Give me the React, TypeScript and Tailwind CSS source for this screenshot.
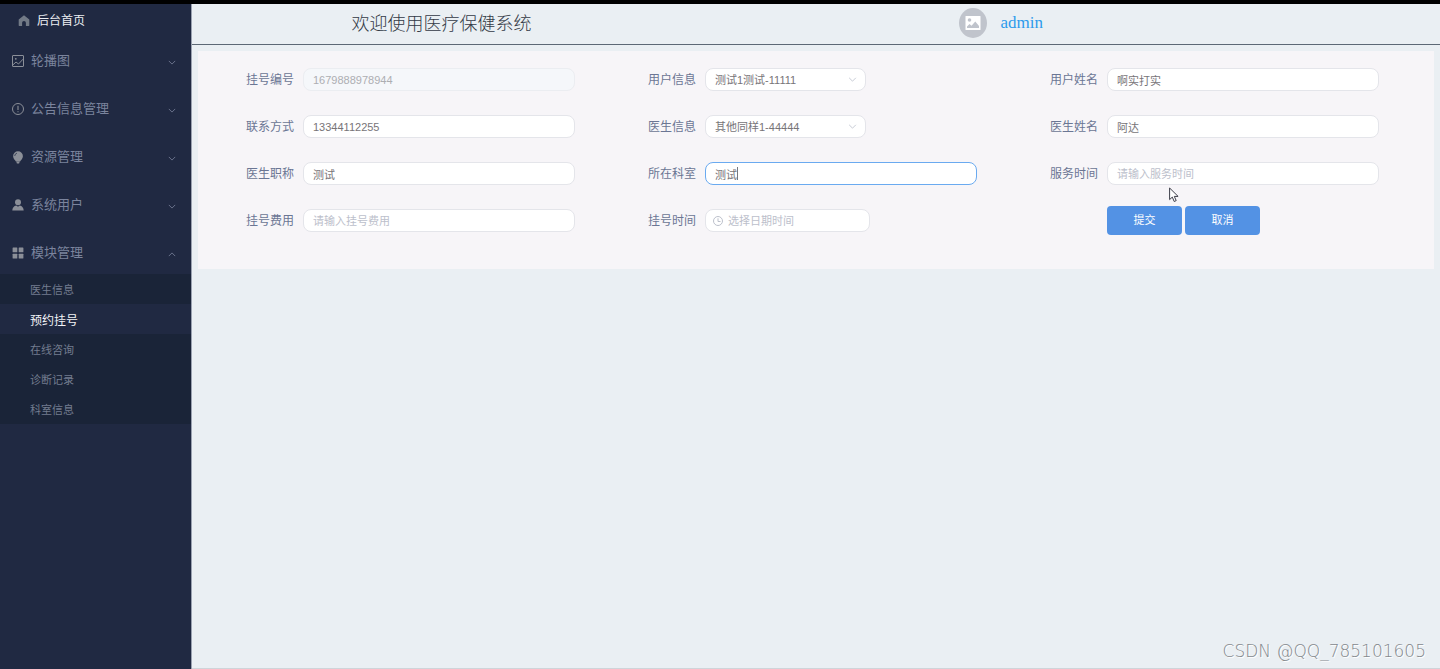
import type { ReactNode } from "react";

const inputBase =
  "block h-[23px] rounded-lg border border-[#e4e5ea] bg-white px-[9px] text-[11px] leading-4 text-[#777478] outline-none placeholder:text-[#bcc0cb] disabled:border-[#ebedf1] disabled:bg-[#f5f7fa] disabled:text-[#adaeb2]";

function Chevron({ className }: { className: string }) {
  return (
    <svg viewBox="0 0 10 6" className={className} fill="none" stroke="currentColor" strokeWidth="1" aria-hidden="true">
      <path d="M1 1l4 4 4-4" />
    </svg>
  );
}

function HomeIcon() {
  return (
    <svg viewBox="0 0 12 12" className="h-3 w-3 text-[#727a86]" fill="currentColor" aria-hidden="true">
      <path d="M6 .3.7 4.600v5.900c0 .3.2.5.5.5h2.900V8c0-1.100.8-1.900 1.900-1.900s1.900.8 1.900 1.900v3h2.900c.3 0 .5-.2.5-.5V4.600z" />
    </svg>
  );
}

function PictureIcon() {
  return (
    <svg viewBox="0 0 12 12" className="h-3 w-3" fill="none" stroke="currentColor" aria-hidden="true">
      <rect x=".5" y=".5" width="11" height="11" rx=".4" />
      <circle cx="3.8" cy="3.8" r=".9" fill="currentColor" stroke="none" />
      <path d="M1 9.800 4 7l2.500 2L11 4.200" />
    </svg>
  );
}

function WarningIcon() {
  return (
    <svg viewBox="0 0 12 12" className="h-3 w-3" fill="none" stroke="currentColor" aria-hidden="true">
      <circle cx="6" cy="6" r="5.5" />
      <path d="M6 2.800v4.200M6 8.200v1.100" strokeWidth="1.1" />
    </svg>
  );
}

function BulbIcon() {
  return (
    <svg viewBox="0 0 12 13" className="h-[13px] w-3" fill="currentColor" aria-hidden="true">
      <path d="M6 .3a4.900 4.900 0 0 0-4.900 4.900c0 2.300 1.800 3.700 2.800 5.300h4.200c1-1.600 2.800-3 2.800-5.300A4.900 4.900 0 0 0 6 .3z" />
      <path d="M4.300 10.500h3.400l-.6 2H4.900z" />
      <path d="M2.700 5A3.300 3.300 0 0 1 5 2.100" fill="none" stroke="#202942" strokeWidth=".7" />
    </svg>
  );
}

function UserIcon() {
  return (
    <svg viewBox="0 0 12 12" className="h-3 w-3" fill="currentColor" aria-hidden="true">
      <circle cx="6" cy="3.2" r="3" />
      <path d="M.3 11.500c0-2.700 1.600-4.500 4-5L6 7.800l1.700-1.300c2.400.5 4 2.300 4 5z" />
    </svg>
  );
}

function GridIcon() {
  return (
    <svg viewBox="0 0 12 12" className="h-3 w-3" fill="currentColor" aria-hidden="true">
      <rect x=".6" y=".6" width="4.7" height="4.7" rx=".5" />
      <rect x="6.7" y=".6" width="4.7" height="4.7" rx=".5" />
      <rect x=".6" y="6.7" width="4.7" height="4.7" rx=".5" />
      <rect x="6.7" y="6.7" width="4.7" height="4.7" rx=".5" />
    </svg>
  );
}

const menu: { label: string; icon: ReactNode; open?: boolean }[] = [
  { label: "轮播图", icon: <PictureIcon /> },
  { label: "公告信息管理", icon: <WarningIcon /> },
  { label: "资源管理", icon: <BulbIcon /> },
  { label: "系统用户", icon: <UserIcon /> },
  { label: "模块管理", icon: <GridIcon />, open: true },
];

const modules = ["医生信息", "预约挂号", "在线咨询", "诊断记录", "科室信息"];

function Sidebar() {
  return (
    <nav className="w-48 shrink-0 border-r border-[#9aa1b0] bg-[#202942]">
      <a href="#home" className="flex h-[33px] items-center gap-[7px] pl-[18px] text-xs text-[#eceef2]">
        <HomeIcon />
        后台首页
      </a>
      <ul className="flex flex-col gap-2 pt-1">
        {menu.map((item) => (
          <li key={item.label}>
            <button
              type="button"
              aria-expanded={!!item.open}
              className="flex h-10 w-full items-center gap-[7px] pr-[15px] pl-3 text-[13px] text-[#7b849d]"
            >
              <span className="text-[#8b8f98]">{item.icon}</span>
              {item.label}
              <Chevron
                className={item.open ? "mt-0.5 ml-auto h-[5px] w-2 rotate-180" : "mt-0.5 ml-auto h-[5px] w-2"}
              />
            </button>
          </li>
        ))}
      </ul>
      <ul className="mt-px bg-[#1a2438]">
        {modules.map((name) => (
          <li key={name}>
            <a
              href={`#${name}`}
              className={
                name === "预约挂号"
                  ? "flex h-[30px] items-center bg-[#202942] pt-[3px] pl-[30px] text-xs text-[#f2f3f6]"
                  : "flex h-[30px] items-center pt-[3px] pl-[30px] text-[11px] text-[#737c8f]"
              }
            >
              {name}
            </a>
          </li>
        ))}
      </ul>
    </nav>
  );
}

function Header() {
  return (
    <header className="flex h-[41px] items-center border-b border-[#5c6875] pb-[3px]">
      <h1 className="w-2/5 pb-0.5 text-center font-['KaiTi','Noto_Sans_CJK_SC',serif] text-lg leading-6 font-light text-[#333a46]">
        欢迎使用医疗保健系统
      </h1>
      <div className="flex w-1/2 items-center justify-center gap-[13px] pr-1">
        <span className="flex h-[30px] w-7 items-center justify-center rounded-[50%] bg-[#c0c4cc]">
          <svg viewBox="0 0 16 14" className="h-3.5 w-4" aria-hidden="true">
            <rect x=".5" width="15" height="14" rx=".5" fill="#fff" />
            <circle cx="4.5" cy="4" r="1.8" fill="#c0c4cc" />
            <path d="M2 12V10.500l2.500-2.500 2 1.800L10.300 5.500 14 10v2z" fill="#c0c4cc" />
          </svg>
        </span>
        <a href="#admin" className="font-['Liberation_Serif',serif] text-[17px] leading-6 text-[#2d9bec]">
          admin
        </a>
      </div>
    </header>
  );
}

function Field({ id, label, children }: { id: string; label: string; children: ReactNode }) {
  return (
    <div className="flex items-center gap-[9px] pr-10 pl-[33px]">
      <label htmlFor={id} className="w-12 shrink-0 text-xs whitespace-nowrap text-[#6b7694]">
        {label}
      </label>
      {children}
    </div>
  );
}

function TextField({
  id,
  label,
  value,
  placeholder,
  disabled,
}: {
  id: string;
  label: string;
  value?: string;
  placeholder?: string;
  disabled?: boolean;
}) {
  return (
    <Field id={id} label={label}>
      <input
        id={id}
        type="text"
        defaultValue={value}
        placeholder={placeholder}
        disabled={disabled}
        className={`${inputBase} w-full min-w-0`}
      />
    </Field>
  );
}

function SelectField({ id, label, value }: { id: string; label: string; value: string }) {
  return (
    <Field id={id} label={label}>
      <div className="relative">
        <select id={id} defaultValue={value} className={`${inputBase} w-[161px] appearance-none`}>
          <option>{value}</option>
        </select>
        <Chevron className="pointer-events-none absolute top-[9px] right-[9px] h-[5px] w-[9px] text-[#bcc1cc]" />
      </div>
    </Field>
  );
}

function RegistrationForm() {
  return (
    <form
      onSubmit={(e) => e.preventDefault()}
      className="mx-1.5 mt-1.5 grid auto-rows-[23px] grid-cols-3 items-center gap-y-6 bg-[#f7f5f8] px-[15px] pt-[17px] pb-[37px]"
    >
      <TextField id="number" label="挂号编号" value="1679888978944" disabled />
      <SelectField id="user" label="用户信息" value="测试1测试-11111" />
      <TextField id="user-name" label="用户姓名" value="啊实打实" />

      <TextField id="phone" label="联系方式" value="13344112255" />
      <SelectField id="doctor" label="医生信息" value="其他同样1-44444" />
      <TextField id="doctor-name" label="医生姓名" value="阿达" />

      <TextField id="title" label="医生职称" value="测试" />
      <Field id="department" label="所在科室">
        <div className="relative w-full">
          <input
            id="department"
            type="text"
            defaultValue="测试"
            className="block h-[23px] w-full rounded-lg border border-[#6aaaf0] bg-white px-[9px] text-[11px] leading-4 text-[#777478] outline-none"
          />
          <span className="absolute top-[5px] left-8 h-[13px] w-px bg-[#77787e]" />
        </div>
      </Field>
      <TextField id="service-time" label="服务时间" placeholder="请输入服务时间" />

      <TextField id="fee" label="挂号费用" placeholder="请输入挂号费用" />
      <Field id="time" label="挂号时间">
        <div className="flex h-[23px] w-[165px] items-center gap-[5px] rounded-lg border border-[#e4e5ea] bg-white px-[7px]">
          <svg viewBox="0 0 10 10" className="h-2.5 w-2.5 shrink-0 text-[#bcc0cb]" fill="none" stroke="currentColor" aria-hidden="true">
            <circle cx="5" cy="5" r="4.5" />
            <path d="M5 2.300V5.500H7.500" />
          </svg>
          <input
            id="time"
            type="text"
            placeholder="选择日期时间"
            className="block w-full min-w-0 bg-transparent text-[11px] leading-4 outline-none placeholder:text-[#bcc0cb]"
          />
        </div>
      </Field>
      <div className="flex gap-[3px] pl-[90px]">
        <button type="submit" className="h-[29px] w-[75px] rounded-sm bg-[#5392e4] text-[11px] text-white">
          提交
        </button>
        <button type="button" className="h-[29px] w-[75px] rounded-sm bg-[#5392e4] text-[11px] text-white">
          取消
        </button>
      </div>
    </form>
  );
}

export default function App() {
  return (
    <div className="relative flex min-h-screen border-t-4 border-black bg-[#eaeff3] font-['Liberation_Sans','Noto_Sans_CJK_SC',sans-serif]">
      <Sidebar />
      <main className="min-w-0 flex-1 border-b border-[#cfd4d9]">
        <Header />
        <RegistrationForm />
      </main>
      <svg
        viewBox="0 0 10 16"
        className="pointer-events-none absolute top-[183px] left-[1169px] h-4 w-2.5"
        fill="#fff"
        stroke="#3c3d48"
        strokeWidth="1"
        aria-hidden="true"
      >
        <path d="M.6 1v11.600l2.700-2.500 1.900 4.400 2-.9-1.900-4.200h3.800z" />
      </svg>
      <p className="absolute right-3.5 bottom-1.5 font-['DejaVu_Sans',sans-serif] text-[17px] leading-6 font-extralight text-[#85898e] [text-shadow:1px_1px_0_#ffffff]">
        CSDN @QQ_785101605
      </p>
    </div>
  );
}
